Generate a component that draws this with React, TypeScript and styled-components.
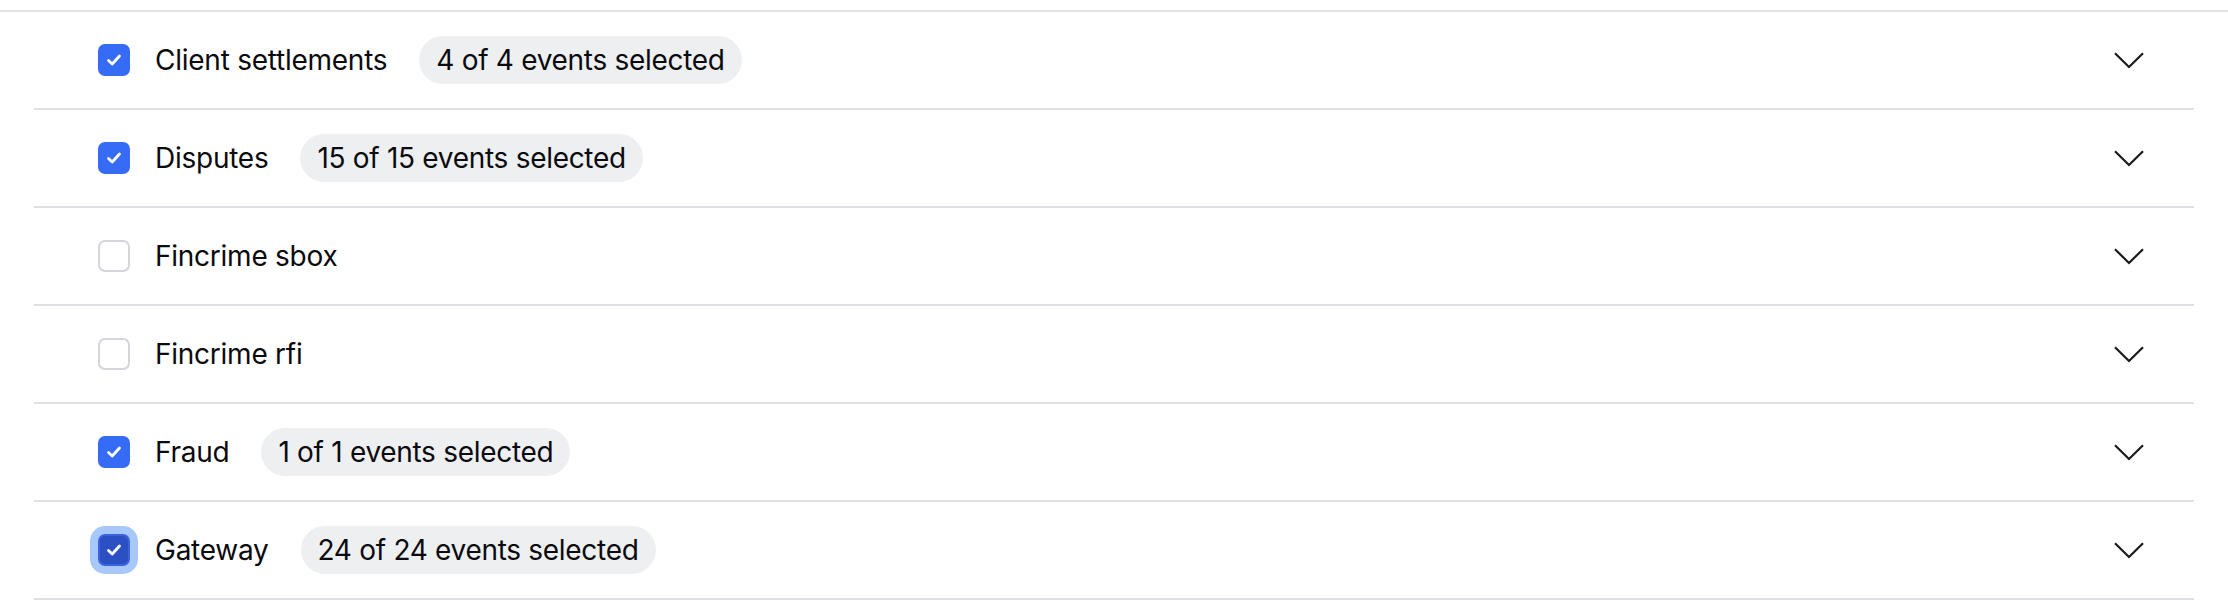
import React from 'react'
import styled, { createGlobalStyle, css } from 'styled-components'

const GlobalStyle = createGlobalStyle`
  html, body {
    margin: 0;
    padding: 0;
    background: #ffffff;
  }
  body {
    font-family: Inter, 'Noto Sans', 'Liberation Sans', sans-serif;
    color: #0b0b0f;
  }
`

const Page = styled.div`
  padding-top: 10px;
  width: 2228px;
`

const TopRule = styled.div`
  height: 2px;
  background: #e1e3e7;
`

const List = styled.ul`
  list-style: none;
  margin: 0 34px;
  padding: 0;
`

const Row = styled.li`
  display: flex;
  align-items: center;
  height: 96px;
  padding: 0 50px 0 64px;
  border-bottom: 2px solid #dddfe3;
`

const Box = styled.span<{ $checked: boolean; $focused?: boolean }>`
  box-sizing: border-box;
  display: flex;
  align-items: center;
  justify-content: center;
  width: 32px;
  height: 32px;
  border-radius: 7px;
  flex-shrink: 0;
  ${(p) =>
    p.$checked
      ? css`
          background: #356bf5;
        `
      : css`
          background: #ffffff;
          border: 2px solid #d3d5da;
        `}
  ${(p) =>
    p.$focused &&
    css`
      background: #2b50c4;
      border: 2px solid #3a64de;
      box-shadow: 0 0 0 8px #a8c8fb;
    `}
`

const Label = styled.span`
  margin-left: 25px;
  font-size: 28px;
  letter-spacing: -0.25px;
  line-height: 1;
`

const Pill = styled.span`
  margin-left: 32px;
  height: 48px;
  display: flex;
  align-items: center;
  padding: 0 17px;
  border-radius: 24px;
  background: #eeeff1;
  font-size: 28px;
  letter-spacing: -0.3px;
`

const Chevron = styled.svg`
  margin-left: auto;
  width: 30px;
  height: 17px;
`

type Group = { name: string; selected?: number; total?: number; focused?: boolean }

const groups: Group[] = [
  { name: 'Client settlements', selected: 4, total: 4 },
  { name: 'Disputes', selected: 15, total: 15 },
  { name: 'Fincrime sbox' },
  { name: 'Fincrime rfi' },
  { name: 'Fraud', selected: 1, total: 1 },
  { name: 'Gateway', selected: 24, total: 24, focused: true },
]

const Check = () => (
  <svg width="16" height="14" viewBox="0 0 16 14" fill="none">
    <path d="M2.5 7.5 L6.2 11 L13.5 3" stroke="#ffffff" strokeWidth="2.8" strokeLinecap="round" strokeLinejoin="round" />
  </svg>
)

export default function App() {
  return (
    <Page>
      <GlobalStyle />
      <TopRule />
      <List>
        {groups.map((g) => {
          const checked = g.selected !== undefined
          return (
            <Row key={g.name}>
              <Box $checked={checked} $focused={g.focused}>
                {checked && <Check />}
              </Box>
              <Label>{g.name}</Label>
              {checked && (
                <Pill>
                  {g.selected} of {g.total} events selected
                </Pill>
              )}
              <Chevron viewBox="0 0 30 17" fill="none">
                <path d="M1 1.2 L15 15 L29 1.2" stroke="#1b1b1f" strokeWidth="2.2" />
              </Chevron>
            </Row>
          )
        })}
      </List>
    </Page>
  )
}
